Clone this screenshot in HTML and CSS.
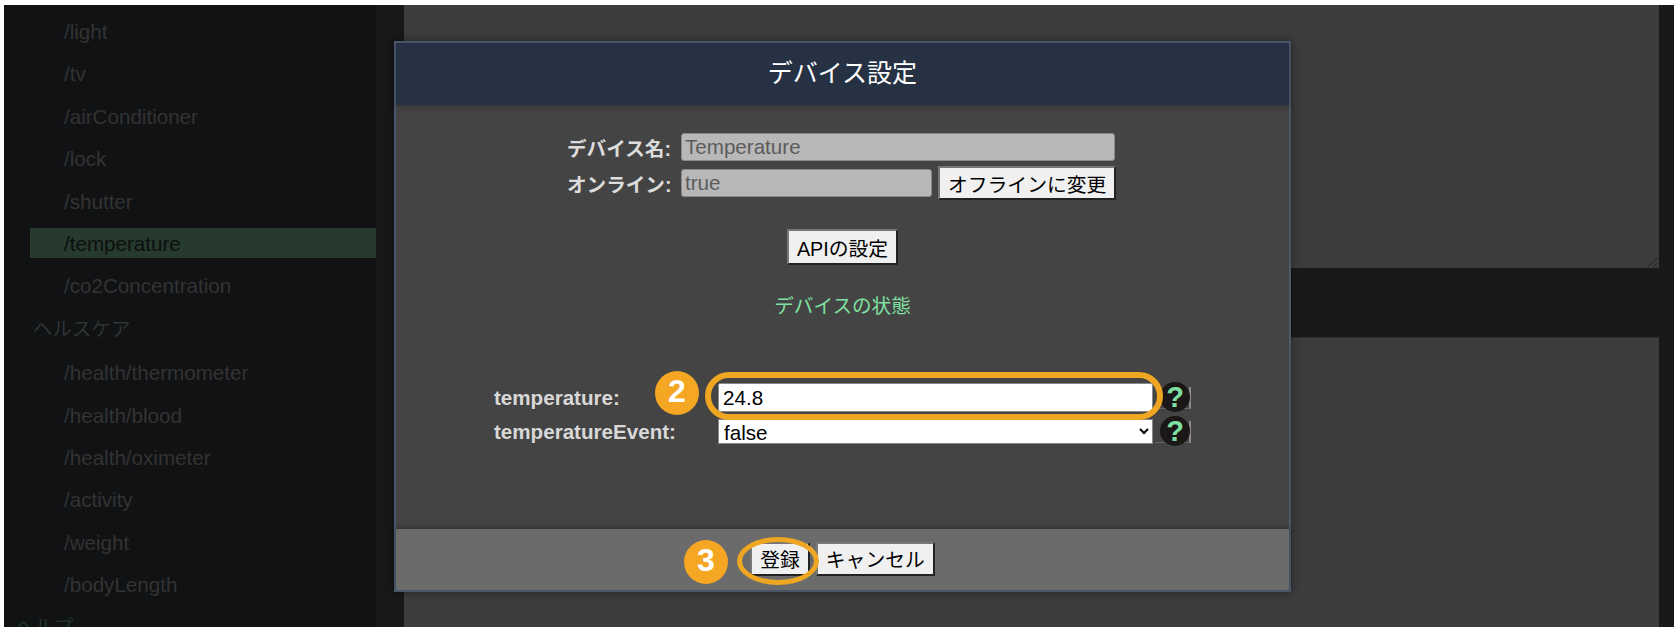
FILE: index.html
```html
<!DOCTYPE html>
<html lang="ja">
<head>
    <meta charset="UTF-8">
    <title>デバイス設定</title>
    <link rel="stylesheet" href="styles.css">
</head>
<body>
    <div class="frame">
        <ul class="sidebar">
            <li class="item">/light</li>
            <li class="item">/tv</li>
            <li class="item">/airConditioner</li>
            <li class="item">/lock</li>
            <li class="item">/shutter</li>
            <li class="item selected">/temperature</li>
            <li class="item">/co2Concentration</li>
            <li class="group">ヘルスケア</li>
            <li class="item">/health/thermometer</li>
            <li class="item">/health/blood</li>
            <li class="item">/health/oximeter</li>
            <li class="item">/activity</li>
            <li class="item">/weight</li>
            <li class="item">/bodyLength</li>
            <li class="group help-group">ヘルプ</li>
        </ul>
        <div class="main">
            <div class="editor">
                <svg class="resize-grip" width="10" height="10" viewBox="0 0 10 10">
                    <path d="M0.5 9.5 L9.5 0.5 M5.5 9.5 L9.5 5.5" stroke="#222" stroke-width="1" fill="none"/>
                </svg>
            </div>
            <div class="band"></div>
            <div class="lower"></div>
        </div>
    </div>

    <div class="modal">
        <div class="modal-header">デバイス設定</div>
        <div class="modal-body">
            <div class="info-row">
                <label class="info-label">デバイス名:</label>
                <input class="info-input wide" type="text" value="Temperature" disabled>
            </div>
            <div class="info-row">
                <label class="info-label">オンライン:</label>
                <input class="info-input" type="text" value="true" disabled>
                <button class="btn" type="button">オフラインに変更</button>
            </div>
            <div class="center-row api-row">
                <button class="btn" type="button">APIの設定</button>
            </div>
            <div class="center-row status-title">デバイスの状態</div>
            <div class="field-grid">
                <label class="field-label">temperature:</label>
                <input class="field-input" type="text" value="24.8">
                <span class="help"><span class="help-icon">?</span></span>
                <label class="field-label">temperatureEvent:</label>
                <select class="field-select">
                    <option>false</option>
                    <option>true</option>
                </select>
                <span class="help"><span class="help-icon">?</span></span>
            </div>
        </div>
        <div class="modal-footer">
            <button class="btn" type="button">登録</button>
            <button class="btn" type="button">キャンセル</button>
        </div>
        <!-- callouts drawn over the screenshot -->
        <span class="step step-two">2</span>
        <span class="ring ring-input"></span>
        <span class="step step-three">3</span>
        <span class="ring ring-button"></span>
    </div>
</body>
</html>
```

FILE: styles.css
```css
* {
    margin: 0;
    padding: 0;
    box-sizing: border-box;
}

html, body {
    height: 632px;
    overflow: hidden;
    background: #fff;
}

body {
    position: relative;
    font-family: "Liberation Sans", "Noto Sans CJK JP", sans-serif;
    font-size: 20.6px;
}

.frame {
    display: flex;
    height: 622px;
    margin: 5px 0 5px 4px;
    overflow: hidden;
}

.sidebar {
    flex: 0 0 400px;
    padding-top: 11px;
    list-style: none;
    background: #111214;
    border-right: 28px solid #17181a;
    overflow: hidden;
}

.item,
.group {
    height: 30px;
    margin: 0 0 12.4px 26px;
    line-height: 32px;
    color: #333;
    white-space: nowrap;
}

.item {
    padding-left: 34px;
}

.group {
    height: 32px;
    padding-left: 3px;
    font-size: 19.5px;
    color: #303432;
}

.help-group {
    margin-left: 8px;
    color: #1f3428;
}

.selected {
    background: #263a2e;
    color: #0d0f0f;
}

.main {
    flex: 1;
    display: flex;
    flex-direction: column;
    background: #191919;
}

.editor {
    position: relative;
    height: 263px;
    margin-right: 15px;
    background: #3c3c3c;
}

.resize-grip {
    position: absolute;
    right: 1px;
    bottom: 1px;
}

.band {
    height: 69px;
}

.lower {
    flex: 1;
    margin-right: 15px;
    background: #3c3c3c;
    border-top: 1px solid #2e2e2e;
}

.modal {
    position: absolute;
    left: 394px;
    top: 41px;
    display: flex;
    flex-direction: column;
    width: 897px;
    height: 551px;
    border: 2px solid #4a586b;
    background: #444;
    box-shadow: 0 0 8px #00000066;
}

.modal-header {
    flex: 0 0 62px;
    line-height: 57px;
    text-align: center;
    font-family: "Noto Sans CJK JP", sans-serif;
    font-size: 25px;
    color: #fff;
    background: #263243;
    box-shadow: 0 2px 6px #00000040;
}

.modal-body {
    flex: 1;
    padding-top: 28px;
}

.info-row {
    display: flex;
    align-items: center;
    height: 28px;
    margin-bottom: 8px;
    padding-left: 171px;
}

.info-label {
    width: 114px;
    font-size: 19.6px;
    font-weight: bold;
    color: #dcdcdc;
    white-space: nowrap;
}

.info-input {
    width: 251px;
    height: 28px;
    padding: 0 3px;
    font: inherit;
    color: #5c5c5c;
    -webkit-text-fill-color: #5c5c5c;
    opacity: 1;
    background: #b8b8b8;
    border: 1px solid #8a8a8a;
    border-radius: 3px;
}

.info-input.wide {
    width: 434px;
}

.btn {
    height: 34px;
    margin-left: 6px;
    padding: 0 8px;
    font-family: "Liberation Sans", "Noto Sans CJK JP", sans-serif;
    font-size: 19.8px;
    color: #000;
    background: #f0f0f0;
    border: 2px solid;
    border-color: #777 #222 #222 #777;
    white-space: nowrap;
}

.center-row {
    display: flex;
    justify-content: center;
}

.api-row {
    margin-top: 32px;
}

.api-row .btn {
    margin-left: 0;
    height: 36px;
}

.status-title {
    margin-top: 27px;
    height: 28px;
    line-height: 28px;
    font-size: 19.6px;
    color: #7ee0a0;
}

.field-grid {
    display: grid;
    grid-template-columns: 224px 435px 38px;
    grid-template-rows: 29px 25px;
    row-gap: 7px;
    margin-top: 63px;
    padding-left: 98px;
    align-items: center;
}

.field-label {
    font-size: 20.6px;
    font-weight: bold;
    color: #d8d8d8;
    white-space: nowrap;
}

.field-input {
    height: 29px;
    padding: 0 4px;
    font: inherit;
    color: #000;
    background: #fff;
    border: 1px solid #888;
    border-radius: 2px;
}

.field-select {
    height: 25px;
    padding-left: 1px;
    font: inherit;
    color: #000;
    background: #fff;
    border: 1px solid #888;
    border-radius: 0;
}

.help {
    position: relative;
    height: 22px;
    margin-left: 2px;
    border-right: 2px solid #8a8a8a;
    border-bottom: 1px solid #666;
}

.help-icon {
    position: absolute;
    left: 5px;
    top: -5px;
    width: 30px;
    height: 30px;
    border-radius: 50%;
    line-height: 30px;
    text-align: center;
    font-size: 29px;
    font-weight: bold;
    color: #7ee0a0;
    background: #1a1716;
}

.modal-footer {
    display: flex;
    justify-content: center;
    align-items: center;
    flex: 0 0 61px;
    padding: 0 6px 2px 0;
    background: #6b6b6b;
    box-shadow: 0 -2px 4px #00000040;
}

.modal-footer .btn {
    margin: 0 0 0 6px;
}

.step {
    position: absolute;
    width: 44px;
    height: 44px;
    border-radius: 50%;
    line-height: 41px;
    text-align: center;
    font-size: 32px;
    font-weight: bold;
    color: #fff;
    background: #f5a623;
}

.step-two {
    left: 259px;
    top: 328px;
}

.step-three {
    left: 288px;
    top: 497px;
}

.ring {
    position: absolute;
    border: 6px solid #efa622;
}

.ring-input {
    left: 309px;
    top: 329px;
    width: 458px;
    height: 48px;
    border-radius: 24px;
}

.ring-button {
    left: 341px;
    top: 494px;
    width: 82px;
    height: 48px;
    border-width: 5px;
    border-radius: 50%;
}
```
